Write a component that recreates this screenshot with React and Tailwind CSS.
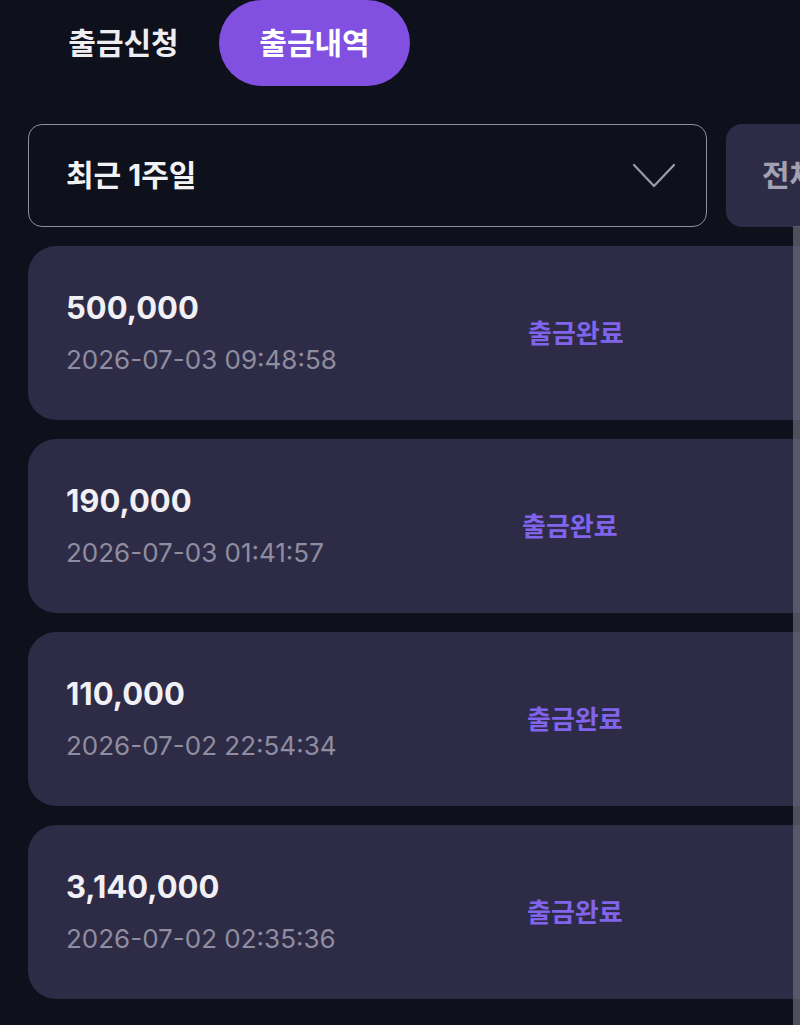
const rows = [
  { amount: '500,000', date: '2026-07-03 09:48:58', offset: 'ml-[462px]' },
  { amount: '190,000', date: '2026-07-03 01:41:57', offset: 'ml-[456px]' },
  { amount: '110,000', date: '2026-07-02 22:54:34', offset: 'ml-[461px]' },
  { amount: '3,140,000', date: '2026-07-02 02:35:36', offset: 'ml-[461px]' },
];

function Chevron() {
  return (
    <svg width="44" height="26" viewBox="0 0 44 26" fill="none">
      <path d="M2 2 L22 23 L42 2" stroke="#9c9ba8" strokeWidth="2.2" strokeLinecap="round" strokeLinejoin="round" />
    </svg>
  );
}

export default function App() {
  return (
    <div
      className="relative w-[800px] h-[1025px] overflow-hidden bg-[#0e101b] text-white"
      style={{ fontFamily: 'Inter, "Noto Sans CJK KR", sans-serif' }}
    >
      {/* tabs */}
      <div className="flex pl-[28px]">
        <button className="w-[191px] h-[86px] rounded-full text-[30px] font-bold text-[#eeeef2]">출금신청</button>
        <button className="w-[191px] h-[86px] rounded-full bg-[#8150e0] text-[30px] font-bold text-white">출금내역</button>
      </div>

      {/* filters */}
      <div className="flex gap-[19px] pl-[28px] mt-[38px]">
        <div className="w-[679px] h-[103px] shrink-0 flex items-center justify-between pl-[37px] pr-[30px] rounded-[14px] border border-[#8f8e9a]">
          <span className="text-[30px] font-bold text-[#f2f2f5]">최근 1주일</span>
          <Chevron />
        </div>
        <div className="w-[160px] h-[103px] shrink-0 flex items-center pl-[36px] rounded-[16px] bg-[#2e2b47]">
          <span className="text-[30px] font-bold text-[#a3a1b2] whitespace-nowrap">전체</span>
        </div>
      </div>

      {/* list */}
      <div className="flex flex-col gap-[19px] pl-[28px] mt-[19px]">
        {rows.map((r) => (
          <div key={r.date} className="w-[1000px] h-[174px] shrink-0 flex items-center rounded-[28px] bg-[#2e2b47] pl-[38px]">
            <div className="flex flex-col w-[300px] shrink-0 -mt-[2px]">
              <span className="text-[31px] leading-[38px] font-bold text-[#f1f0f5]">{r.amount}</span>
              <span className="mt-[17px] text-[26px] leading-[32px] text-[#8f8d9f]">{r.date}</span>
            </div>
            <span className={`${r.offset} -translate-x-[300px] text-[26px] font-bold text-[#8064ec]`}>출금완료</span>
          </div>
        ))}
      </div>

      {/* scrollbar */}
      <div className="absolute right-0 top-[226px] w-[7px] h-[799px] bg-[#6c6b7a]/70" />
    </div>
  );
}
